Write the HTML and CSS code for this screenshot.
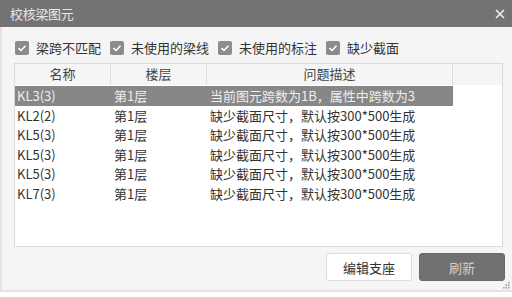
FILE: index.html
```html
<!DOCTYPE html>
<html lang="zh">
<head>
<meta charset="utf-8">
<title>校核梁图元</title>
<link rel="stylesheet" href="styles.css">
</head>
<body>
<div class="dialog">
  <div class="titlebar">
    <span class="title">校核梁图元</span>
    <svg class="close" width="10" height="10" viewBox="0 0 10 10"><path d="M1 1L9 9M9 1L1 9" stroke="#f0f0f0" stroke-width="1.6"/></svg>
  </div>
  <div class="checks">
    <label class="check"><span class="box"><svg width="14" height="14" viewBox="0 0 14 14"><path d="M3.5 7.2L6 9.5L10.5 4.8" fill="none" stroke="#fff" stroke-width="1.6"/></svg></span>梁跨不匹配</label>
    <label class="check"><span class="box"><svg width="14" height="14" viewBox="0 0 14 14"><path d="M3.5 7.2L6 9.5L10.5 4.8" fill="none" stroke="#fff" stroke-width="1.6"/></svg></span>未使用的梁线</label>
    <label class="check"><span class="box"><svg width="14" height="14" viewBox="0 0 14 14"><path d="M3.5 7.2L6 9.5L10.5 4.8" fill="none" stroke="#fff" stroke-width="1.6"/></svg></span>未使用的标注</label>
    <label class="check"><span class="box"><svg width="14" height="14" viewBox="0 0 14 14"><path d="M3.5 7.2L6 9.5L10.5 4.8" fill="none" stroke="#fff" stroke-width="1.6"/></svg></span>缺少截面</label>
  </div>
  <div class="table">
    <div class="row head">
      <div class="cell">名称</div>
      <div class="cell">楼层</div>
      <div class="cell">问题描述</div>
      <div class="cell filler"></div>
    </div>
    <div class="row selected">
      <div class="cell">KL3(3)</div>
      <div class="cell">第1层</div>
      <div class="cell">当前图元跨数为1B，属性中跨数为3</div>
      <div class="cell"></div>
    </div>
    <div class="row">
      <div class="cell">KL2(2)</div>
      <div class="cell">第1层</div>
      <div class="cell">缺少截面尺寸，默认按300*500生成</div>
      <div class="cell"></div>
    </div>
    <div class="row">
      <div class="cell">KL5(3)</div>
      <div class="cell">第1层</div>
      <div class="cell">缺少截面尺寸，默认按300*500生成</div>
      <div class="cell"></div>
    </div>
    <div class="row">
      <div class="cell">KL5(3)</div>
      <div class="cell">第1层</div>
      <div class="cell">缺少截面尺寸，默认按300*500生成</div>
      <div class="cell"></div>
    </div>
    <div class="row">
      <div class="cell">KL5(3)</div>
      <div class="cell">第1层</div>
      <div class="cell">缺少截面尺寸，默认按300*500生成</div>
      <div class="cell"></div>
    </div>
    <div class="row">
      <div class="cell">KL7(3)</div>
      <div class="cell">第1层</div>
      <div class="cell">缺少截面尺寸，默认按300*500生成</div>
      <div class="cell"></div>
    </div>
  </div>
  <div class="buttons">
    <button class="btn">编辑支座</button>
    <button class="btn primary">刷新</button>
  </div>
  <svg class="grip" width="7" height="7" viewBox="0 0 7 7"><g fill="#9a9a9a"><rect x="5" y="0" width="1.5" height="1.5"/><rect x="2.5" y="2.5" width="1.5" height="1.5"/><rect x="5" y="2.5" width="1.5" height="1.5"/><rect x="0" y="5" width="1.5" height="1.5"/><rect x="2.5" y="5" width="1.5" height="1.5"/><rect x="5" y="5" width="1.5" height="1.5"/></g></svg>
</div>
</body>
</html>
```
FILE: styles.css
```css
* { box-sizing: border-box; }
html, body {
  margin: 0;
  padding: 0;
  background: #ffffff;
}
body {
  width: 512px;
  height: 297px;
  overflow: hidden;
  font-family: "Noto Sans CJK SC", "Noto Sans", sans-serif;
  font-size: 13px;
  color: #333333;
}
.dialog {
  position: relative;
  width: 512px;
  height: 292px;
  background: #f5f5f5;
  border-left: 2px solid #e3e3e3;
  border-bottom: 2px solid #e3e3e3;
  display: flex;
  flex-direction: column;
}
.titlebar {
  height: 27px;
  margin-left: -2px;
  background: #737373;
  display: flex;
  align-items: center;
  justify-content: space-between;
  padding: 0 7px 0 10px;
  color: #e6e6e6;
  font-size: 13px;
  line-height: 1;
}
.title { letter-spacing: -0.3px; }
.close { display: block; margin-top: 1px; }
.checks {
  display: flex;
  align-items: center;
  margin-top: 13px;
  padding-left: 13px;
  height: 15px;
  gap: 9px;
}
.check {
  display: flex;
  align-items: center;
  gap: 7px;
  line-height: 15px;
  color: #333;
}
.box {
  width: 14px;
  height: 14px;
  border-radius: 2px;
  background: #8c8c8c;
  display: block;
}
.box svg { display: block; }
.table {
  margin: 8px 0 0 12px;
  width: 489px;
  height: 184px;
  border: 1px solid #dadada;
  background: #ffffff;
}
.row {
  display: grid;
  grid-template-columns: 96px 96px 246px 1fr;
  height: 19.6px;
  line-height: 19.6px;
}
.row .cell {
  padding-left: 2px;
  white-space: nowrap;
  overflow: hidden;
}
.row .cell:nth-child(2) { padding-left: 3px; }
.row .cell:nth-child(3) { padding-left: 3px; }
.head {
  height: 21px;
  line-height: 20px;
  background: #f5f5f5;
  color: #444;
}
.head .cell {
  text-align: center;
  border-right: 1px solid #dedede;
  padding-left: 0 !important;
}
.head .cell.filler { border-right: none; }
.selected { color: #eeeeee; }
.selected .cell:nth-child(-n+3) { background: #878787; }
.selected { margin-top: 1px; }
.buttons {
  display: flex;
  justify-content: flex-end;
  gap: 7px;
  margin-top: 6px;
  padding-right: 7px;
}
.btn {
  width: 86px;
  height: 28px;
  border: 1px solid #dcdcdc;
  border-radius: 3px;
  background: #ffffff;
  font-family: "Noto Sans CJK SC", "Noto Sans", sans-serif;
  font-size: 13px;
  color: #333;
  padding: 0;
}
.btn.primary {
  background: #717171;
  border-color: #6a6a6a;
  color: #cfcfcf;
}
.grip {
  position: absolute;
  right: 2px;
  bottom: 1px;
}
```
